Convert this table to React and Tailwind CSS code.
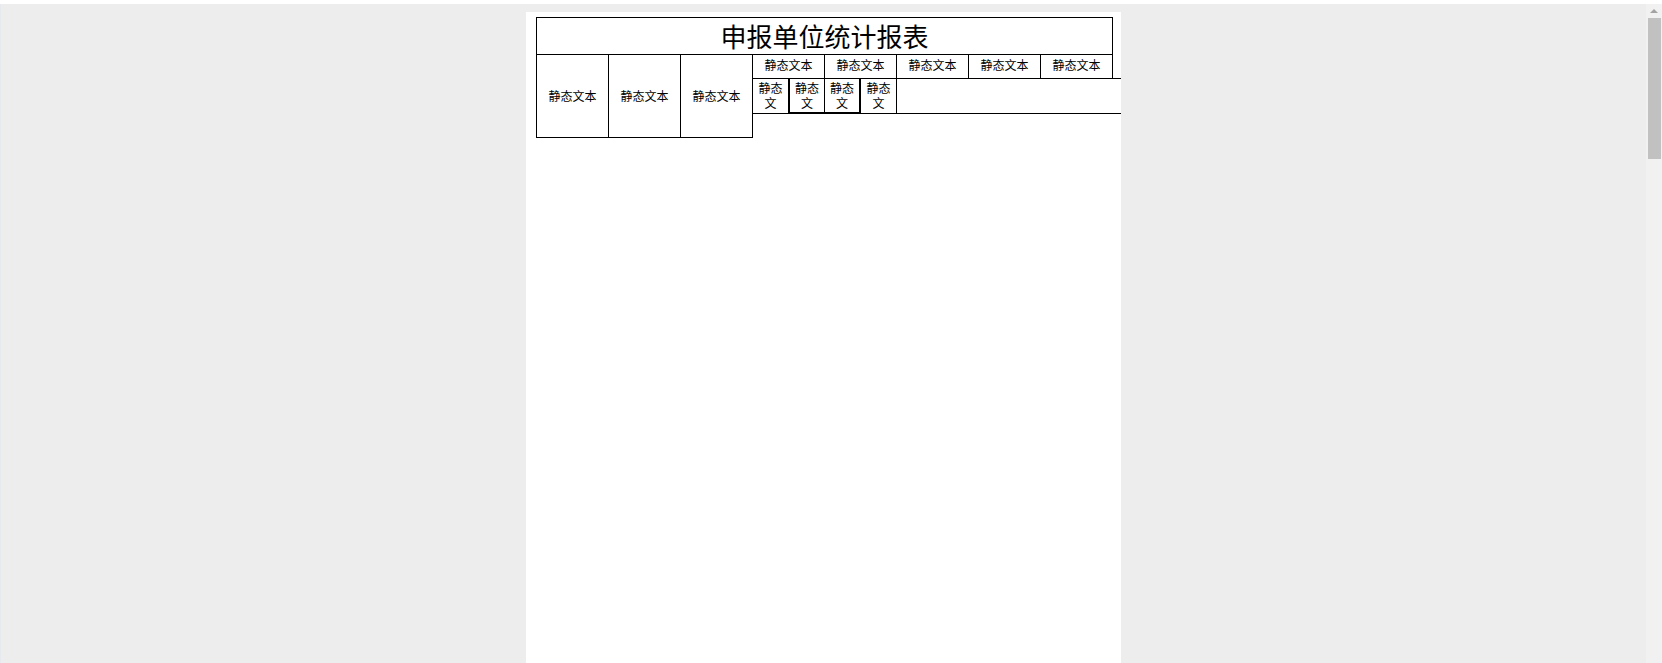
export default function App() {
  const font = { fontFamily: '"Noto Sans CJK SC", "Noto Sans", sans-serif' };
  const top5 = [0, 1, 2, 3, 4];
  return (
    <div className="w-[1662px] h-[663px] overflow-hidden bg-white flex flex-col" style={font}>
      <div className="h-[4px] bg-white shrink-0" />
      <div className="flex flex-1 min-h-0">
        <div className="w-[1px] bg-[#e6eaee] shrink-0" />
        <div className="flex-1 bg-[#ededed] flex justify-start pl-[525px] pt-[8px] overflow-hidden">
          <div className="w-[595px] shrink-0 h-[700px] bg-white overflow-hidden pl-[10px] pt-[5px] text-black">
            <div className="w-[577px] h-[38px] border border-black flex items-center justify-center text-[26px] leading-none">
              申报单位统计报表
            </div>
            <div className="flex w-[800px]">
              <div className="w-[73px] shrink-0 h-[83px] border-l border-r border-b border-black flex items-center justify-center text-[12px]">静态文本</div>
              <div className="w-[72px] shrink-0 h-[83px] border-r border-b border-black flex items-center justify-center text-[12px]">静态文本</div>
              <div className="w-[72px] shrink-0 h-[83px] border-r border-b border-black flex items-center justify-center text-[12px]">静态文本</div>
              <div className="flex flex-col shrink-0">
                <div className="flex h-[23px]">
                  {top5.map((i) => (
                    <div key={i} className="w-[72px] shrink-0 h-[23px] pb-[3px] border-r border-black flex items-center justify-center text-[12px]">静态文本</div>
                  ))}
                </div>
                <div className="w-[500px] h-[36px] border-t border-b border-black flex text-[12px] leading-[15px]">
                  <div className="w-[36px] shrink-0 h-[34px] border-r border-black overflow-hidden text-center px-[5px] pt-[1px] break-all">静态文</div>
                  <div className="w-[36px] shrink-0 h-[34px] border-l border-r border-b border-black overflow-hidden text-center px-[4px] pt-[1px] break-all">静态文</div>
                  <div className="w-[36px] shrink-0 h-[34px] border-r-2 border-b border-black overflow-hidden text-center px-[5px] pt-[1px] break-all">静态文</div>
                  <div className="w-[36px] shrink-0 h-[34px] border-r border-black overflow-hidden text-center px-[5px] pt-[1px] break-all">静态文</div>
                </div>
              </div>
            </div>
          </div>
        </div>
        <div className="w-[16px] bg-[#f1f1f1] shrink-0 flex flex-col items-center">
          <div className="h-[14px] flex items-center justify-center">
            <div className="w-0 h-0 border-l-[4px] border-r-[4px] border-b-[4px] border-l-transparent border-r-transparent border-b-[#a3a3a3]" />
          </div>
          <div className="w-[13px] ml-[1px] h-[141px] bg-[#c1c1c1]" />
        </div>
      </div>
    </div>
  );
}
